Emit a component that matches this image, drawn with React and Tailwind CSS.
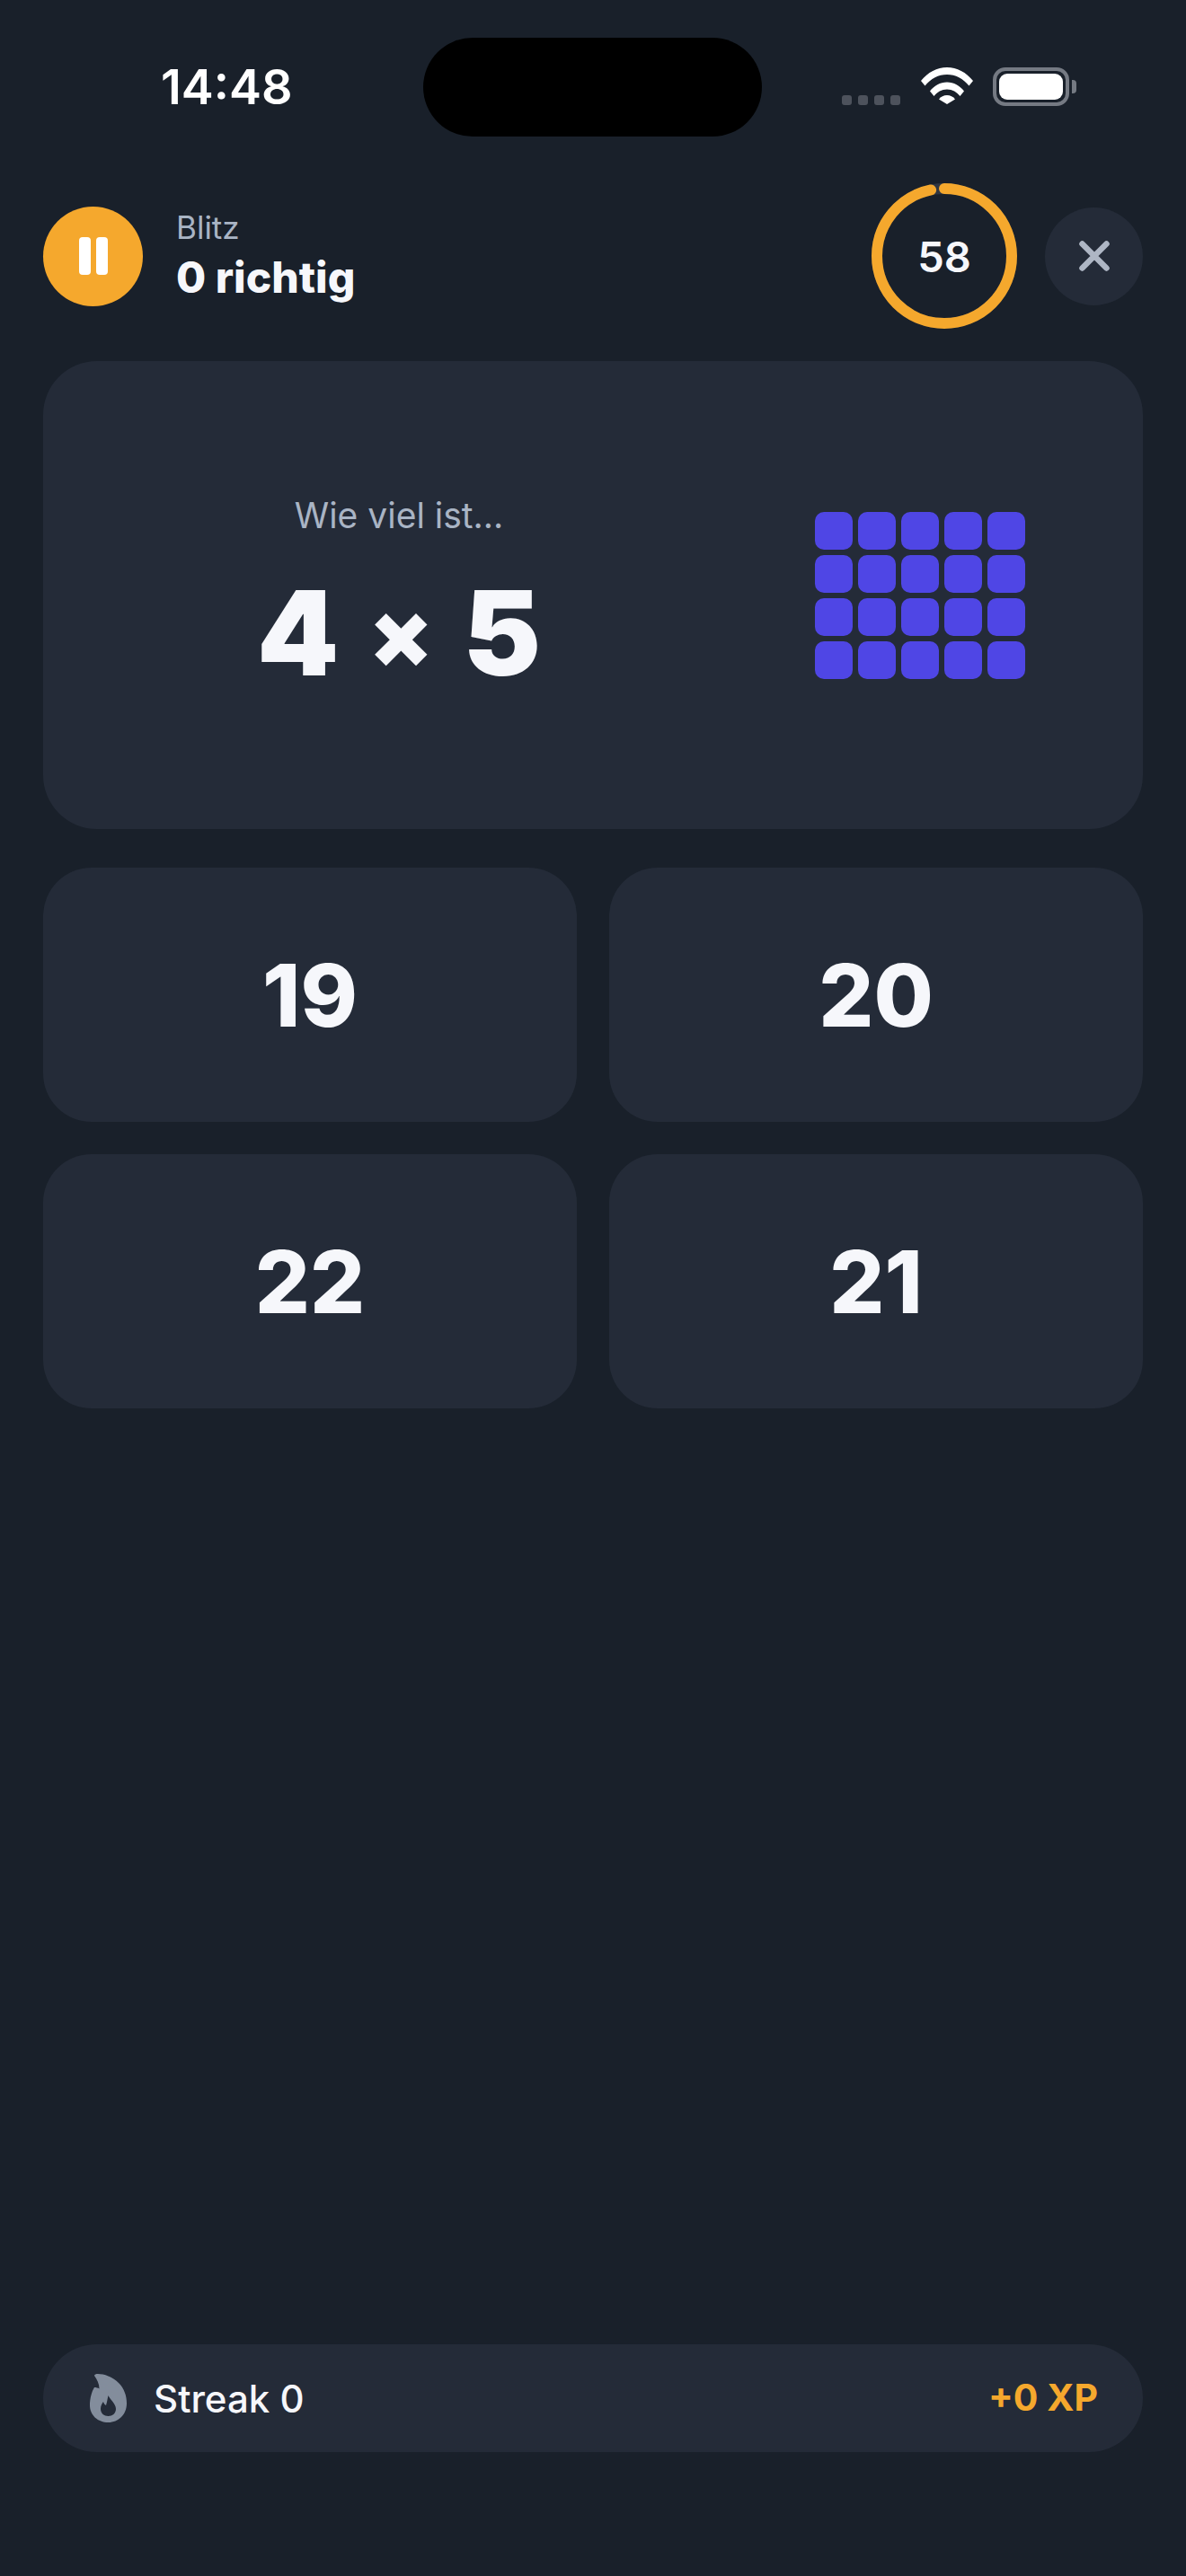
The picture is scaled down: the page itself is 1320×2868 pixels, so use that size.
const answers = ['19', '20', '22', '21'];
const tiles = Array.from({ length: 20 });

function StatusBar() {
  return (
    <div className="flex h-[110px] items-center pl-[179px] mt-[42px]">
      <div className="w-[292px] text-[54px] leading-none font-semibold text-white">14:48</div>
      <div className="h-[110px] w-[377px] rounded-[55px] bg-black" />
      <div className="ml-[89px] flex h-[44px] items-start">
        <div className="mt-[31px] flex gap-[7px]">
          <span className="h-[11px] w-[11px] rounded-[3px] bg-[#4d525c]" />
          <span className="h-[11px] w-[11px] rounded-[3px] bg-[#4d525c]" />
          <span className="h-[11px] w-[11px] rounded-[3px] bg-[#4d525c]" />
          <span className="h-[11px] w-[11px] rounded-[3px] bg-[#4d525c]" />
        </div>
        <svg className="ml-[23px]" width="58" height="42" viewBox="0 0 58 42" fill="white">
          <path d="M0 15C7.5 5.5 18 0 29 0s21.500 5.500 29 15l-4.500 5.500C47 12.500 38.500 8 29 8S11 12.500 4.500 20.500Z" />
          <path d="M10 26.500C14.500 20.500 21.500 16.500 29 16.500s14.500 4 19 10l-4.500 5.500C40 27.500 35 24.500 29 24.500S18 27.500 14.500 32Z" />
          <path d="M20 36.500C22 33.500 25.500 32 29 32s7 1.500 9 4.500L29 42Z" transform="translate(0 -1)" />
        </svg>
        <div className="relative ml-[22px] flex h-[43px] w-[85px] items-center justify-center rounded-[14px] border-[4px] border-[#757a83]">
          <div className="h-[29px] w-[71px] rounded-[9px] bg-white" />
          <div className="absolute right-[-12px] top-[10px] h-[15px] w-[5px] rounded-r-[4px] bg-[#757a83]" />
        </div>
      </div>
    </div>
  );
}

function Ring() {
  return (
    <div className="relative flex h-[162px] w-[162px] items-center justify-center">
      <svg className="absolute inset-0" width="162" height="162" viewBox="0 0 162 162" fill="none">
        <circle cx="81" cy="81" r="75" stroke="#303642" strokeWidth="12" />
        <circle
          cx="81"
          cy="81"
          r="75"
          stroke="#f5a82d"
          strokeWidth="12"
          strokeLinecap="round"
          strokeDasharray="455.5 471.2"
          transform="rotate(-90 81 81)"
        />
      </svg>
      <span className="text-[47px] leading-none font-semibold text-[#f6f7fb]">58</span>
    </div>
  );
}

function Flame() {
  return (
    <svg width="41" height="54" viewBox="0 0 41 54">
      <path
        fill="#838d9c"
        fillRule="evenodd"
        d="M5 2C5 0.500 7 0 9 0C16 0 25 3 32 10C38 16 41 24 41 33C41 45 32 54 20.500 54C9 54 0 46 0 35C0 27 2 20 5 15C7 15 9 15.500 10.500 16.500C10.500 11 8 6 5 2ZM20.500 24C22 28 29 33 29 39C29 44 25 47 20.500 47C16 47 12 44 12 39C12 35.500 13.500 33 15 31C15.500 33 16.500 34 18 35C19 32 19.500 28 20.500 24Z"
      />
    </svg>
  );
}

export default function App() {
  return (
    <div className="flex h-[2868px] w-[1320px] flex-col overflow-hidden bg-[#19202a] font-['Inter',sans-serif]">
      <StatusBar />

      <header className="mt-[52px] flex h-[162px] items-center px-[48px]">
        <button
          type="button"
          className="flex h-[111px] w-[111px] shrink-0 items-center justify-center gap-[6px] rounded-full bg-[#f5a82d]"
        >
          <span className="h-[42px] w-[13px] rounded-[4px] bg-white" />
          <span className="h-[42px] w-[13px] rounded-[4px] bg-white" />
        </button>
        <div className="ml-[37px] flex flex-1 flex-col">
          <span className="text-[35px] leading-[40px] text-[#a9b4c4]">Blitz</span>
          <span className="mt-[8px] text-[48px] leading-[56px] font-extrabold text-[#f6f7fb]">0 richtig</span>
        </div>
        <Ring />
        <button
          type="button"
          className="ml-[31px] flex h-[109px] w-[109px] items-center justify-center rounded-full bg-[#242b38]"
        >
          <svg width="34" height="34" viewBox="0 0 34 34" fill="none" stroke="#aeb6c4" strokeWidth="6.500" strokeLinecap="round">
            <path d="M3.500 3.500L30.500 30.500M30.500 3.500L3.500 30.500" />
          </svg>
        </button>
      </header>

      <main className="mt-[36px] flex flex-col px-[48px]">
        <section className="flex h-[521px] items-center justify-between rounded-[60px] bg-[#242b38] pl-[48px] pr-[131px]">
          <div className="flex w-[696px] flex-col items-center">
            <span className="text-[39px] leading-[48px] text-[#a9b4c4]">Wie viel ist...</span>
            <span className="mt-[37px] flex h-[140px] items-center gap-[33px] text-[130px] leading-[140px] font-black text-[#f6f7fb]">
              <span>4</span>
              <span className="text-[104px] font-black">×</span>
              <span>5</span>
            </span>
          </div>
          <div className="grid grid-cols-[repeat(5,42px)] gap-[6px]">
            {tiles.map((_, i) => (
              <span key={i} className="h-[42px] w-[42px] rounded-[10px] bg-[#4f46e5]" />
            ))}
          </div>
        </section>

        <div className="mt-[43px] grid grid-cols-2 gap-[36px]">
          {answers.map((a) => (
            <button
              key={a}
              type="button"
              className="flex h-[283px] items-center justify-center rounded-[54px] bg-[#242b38] text-[96px] font-extrabold text-[#f6f7fb]"
            >
              {a}
            </button>
          ))}
        </div>
      </main>

      <footer className="mx-[48px] mb-[138px] mt-auto flex h-[120px] items-center justify-between rounded-[60px] bg-[#242b38] pl-[52px] pr-[50px]">
        <div className="flex items-center gap-[30px]">
          <Flame />
          <span className="text-[42px] font-medium text-[#f6f7fb]">Streak 0</span>
        </div>
        <span className="text-[41px] font-bold text-[#f5a82d]">+0 XP</span>
      </footer>
    </div>
  );
}
